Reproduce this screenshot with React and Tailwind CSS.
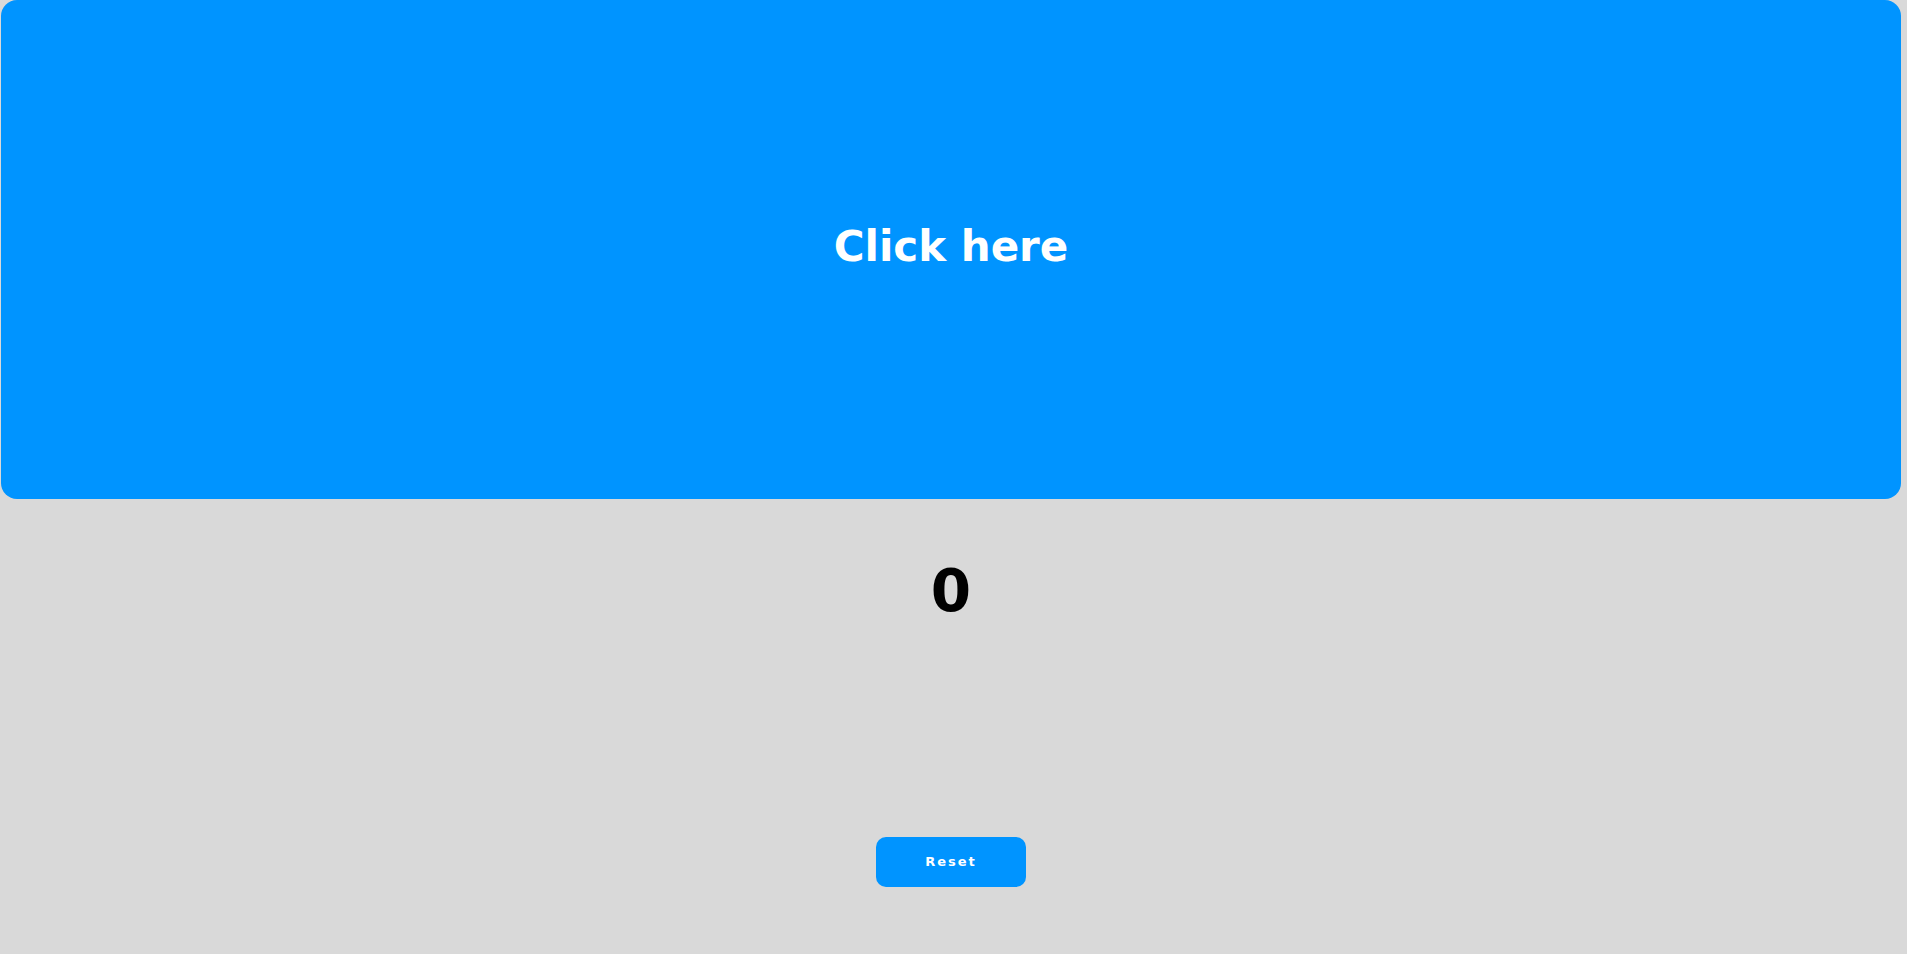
export default function App() {
  return (
    <div
      className="min-h-screen w-full bg-[#d9d9d9]"
      style={{ fontFamily: '"DejaVu Sans", "Noto Sans", sans-serif' }}
    >
      <div className="flex w-[1902px] flex-col items-center">
        <button className="ml-[1px] flex h-[499px] w-[1900px] items-center justify-center self-start rounded-2xl bg-[#0094ff] pb-[6px]">
          <span className="text-[42px] leading-none font-bold text-white">
            Click here
          </span>
        </button>
        <div className="mt-[63px] text-[58px] leading-none font-bold text-black">
          0
        </div>
        <button className="mt-[217px] flex h-[50px] w-[150px] items-center justify-center rounded-[10px] bg-[#0094ff]">
          <span className="text-[13px] font-bold tracking-[2px] text-white">
            Reset
          </span>
        </button>
      </div>
    </div>
  );
}
